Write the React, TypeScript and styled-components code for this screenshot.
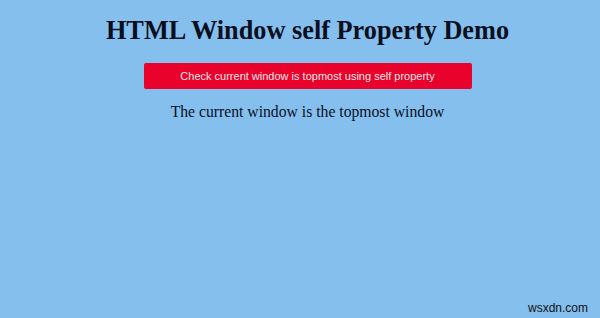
import React from "react";
import styled, { createGlobalStyle } from "styled-components";

const Global = createGlobalStyle`
  html, body { margin: 0; padding: 0; }
  body { background: #85bfee; width: 600px; height: 318px; overflow: hidden; }
`;

const Page = styled.div`
  position: relative;
  box-sizing: border-box;
  width: 600px;
  height: 318px;
  padding-left: 15px;
  display: flex;
  flex-direction: column;
  align-items: center;
  font-family: "Liberation Serif", serif;
  color: #0a0f1e;
`;

const Title = styled.h1`
  margin: 16px 0 0 0;
  font-size: 26.3px;
  line-height: 30px;
  font-weight: bold;
`;

const Button = styled.button`
  margin-top: 17px;
  width: 328px;
  height: 26px;
  border: none;
  border-radius: 2px;
  background: #e8022c;
  color: #f4e6ea;
  font-family: "Liberation Sans", Arial, sans-serif;
  font-size: 11px;
  padding: 0;
`;

const Message = styled.p`
  margin: 13px 0 0 0;
  font-size: 15.7px;
  line-height: 20px;
`;

const Watermark = styled.span`
  position: absolute;
  right: 12px;
  bottom: 3px;
  font-family: "Liberation Sans", Arial, sans-serif;
  font-size: 12px;
  color: #111;
`;

export default function App() {
  return (
    <>
      <Global />
      <Page>
        <Title>HTML Window self Property Demo</Title>
        <Button>Check current window is topmost using self property</Button>
        <Message>The current window is the topmost window</Message>
        <Watermark>wsxdn.com</Watermark>
      </Page>
    </>
  );
}
